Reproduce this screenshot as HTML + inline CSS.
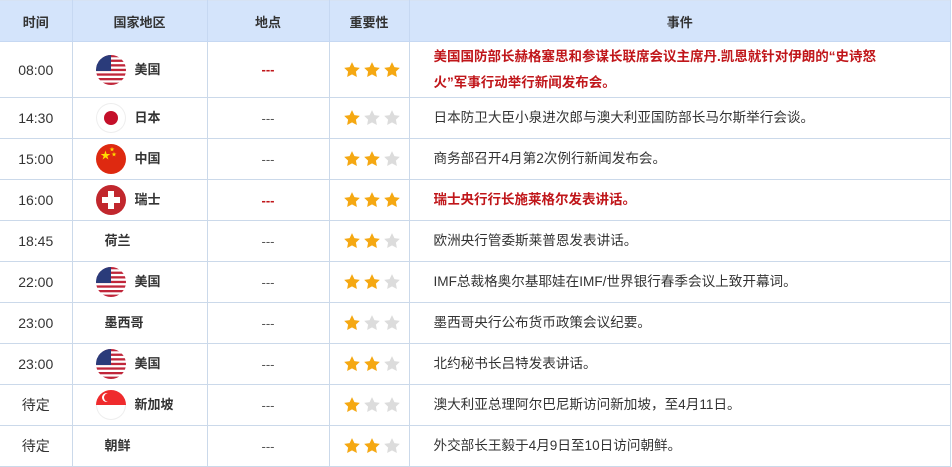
<!DOCTYPE html>
<html><head><meta charset="utf-8"><style>
body{margin:0;background:#fff;font-family:"Liberation Sans","Noto Sans CJK SC",sans-serif;font-size:13px;color:#333;}
table{border-collapse:collapse;table-layout:fixed;width:951px;position:absolute;left:0;top:0;}
td,th{border:1px solid #cbd9ea;padding:0;}
tr td:first-child,tr th:first-child{border-left:none;}
th{background:#d4e4fb;height:40px;font-weight:bold;font-size:13px;color:#333;border-color:#c6d8f2;border-top:1px solid #d6e2f3;}
td{height:40px;}
.t{text-align:center;font-size:14px;}
.c{position:relative;}
.c .f{position:absolute;left:23px;top:50%;margin-top:-15px;width:30px;height:30px;border-radius:50%;overflow:hidden;}
.c .n{position:absolute;left:62px;top:50%;margin-top:-9px;font-weight:bold;line-height:18px;}
.c .n2{left:32px;}
.d{text-align:center;color:#555;}
.dr{color:#c0161a;font-weight:bold;}
.s{padding-left:13px;}
.s svg{display:inline-block;vertical-align:middle;margin-right:2px;}
.e{padding-left:24px;line-height:26px;font-size:13.6px;}
.r{color:#c0161a;font-weight:bold;font-size:13.5px;}
</style></head><body>
<svg width="0" height="0" style="position:absolute"><defs>
<symbol id="st" viewBox="0 0 24 24"><path d="M12 1.5l3.2 6.6 7.2 1-5.2 5 1.3 7.2L12 17.9 5.5 21.3l1.3-7.2-5.2-5 7.2-1z"/></symbol>
<symbol id="us" viewBox="0 0 30 30"><rect width="30" height="30" fill="#fff"/><g fill="#c0263a"><rect y="0" width="30" height="2.3"/><rect y="4.6" width="30" height="2.3"/><rect y="9.2" width="30" height="2.3"/><rect y="13.8" width="30" height="2.3"/><rect y="18.4" width="30" height="2.3"/><rect y="23" width="30" height="2.3"/><rect y="27.6" width="30" height="2.4"/></g><rect width="15" height="16" fill="#2a3b7a"/></symbol>
</defs></svg>
<table>
<colgroup><col style="width:72px"><col style="width:135px"><col style="width:122px"><col style="width:80px"><col></colgroup>
<tr><th>时间</th><th>国家地区</th><th>地点</th><th>重要性</th><th>事件</th></tr>
<tr><td class="t" style="height:55px">08:00</td><td class="c"><div class="f"><svg width="30" height="30"><use href="#us"/></svg></div><span class="n">美国</span></td><td class="d dr">---</td><td class="s"><svg width="18" height="18" fill="#f5a812"><use href="#st"/></svg><svg width="18" height="18" fill="#f5a812"><use href="#st"/></svg><svg width="18" height="18" fill="#f5a812"><use href="#st"/></svg></td><td class="e r" style="white-space:nowrap">美国国防部长赫格塞思和参谋长联席会议主席丹.凯恩就针对伊朗的“史诗怒<br>火”军事行动举行新闻发布会。</td></tr>
<tr><td class="t">14:30</td><td class="c"><div class="f" style="background:#fff;box-shadow:inset 0 0 0 1px #eee"><div style="position:absolute;left:8px;top:8px;width:14px;height:14px;border-radius:50%;background:#c4102a"></div></div><span class="n">日本</span></td><td class="d">---</td><td class="s"><svg width="18" height="18" fill="#f5a812"><use href="#st"/></svg><svg width="18" height="18" fill="#dcdcdc"><use href="#st"/></svg><svg width="18" height="18" fill="#dcdcdc"><use href="#st"/></svg></td><td class="e">日本防卫大臣小泉进次郎与澳大利亚国防部长马尔斯举行会谈。</td></tr>
<tr><td class="t">15:00</td><td class="c"><div class="f" style="background:#de2910"><span style="position:absolute;left:5px;top:3px;color:#ffde00;font-size:10px">★</span><span style="position:absolute;left:14px;top:2px;color:#ffde00;font-size:5px">★</span><span style="position:absolute;left:16px;top:7px;color:#ffde00;font-size:5px">★</span></div><span class="n">中国</span></td><td class="d">---</td><td class="s"><svg width="18" height="18" fill="#f5a812"><use href="#st"/></svg><svg width="18" height="18" fill="#f5a812"><use href="#st"/></svg><svg width="18" height="18" fill="#dcdcdc"><use href="#st"/></svg></td><td class="e">商务部召开4月第2次例行新闻发布会。</td></tr>
<tr><td class="t">16:00</td><td class="c"><div class="f" style="background:#c1272d"><div style="position:absolute;left:12px;top:6px;width:6px;height:18px;background:#fff"></div><div style="position:absolute;left:6px;top:12px;width:18px;height:6px;background:#fff"></div></div><span class="n">瑞士</span></td><td class="d dr">---</td><td class="s"><svg width="18" height="18" fill="#f5a812"><use href="#st"/></svg><svg width="18" height="18" fill="#f5a812"><use href="#st"/></svg><svg width="18" height="18" fill="#f5a812"><use href="#st"/></svg></td><td class="e r">瑞士央行行长施莱格尔发表讲话。</td></tr>
<tr><td class="t">18:45</td><td class="c"><span class="n n2">荷兰</span></td><td class="d">---</td><td class="s"><svg width="18" height="18" fill="#f5a812"><use href="#st"/></svg><svg width="18" height="18" fill="#f5a812"><use href="#st"/></svg><svg width="18" height="18" fill="#dcdcdc"><use href="#st"/></svg></td><td class="e">欧洲央行管委斯莱普恩发表讲话。</td></tr>
<tr><td class="t">22:00</td><td class="c"><div class="f"><svg width="30" height="30"><use href="#us"/></svg></div><span class="n">美国</span></td><td class="d">---</td><td class="s"><svg width="18" height="18" fill="#f5a812"><use href="#st"/></svg><svg width="18" height="18" fill="#f5a812"><use href="#st"/></svg><svg width="18" height="18" fill="#dcdcdc"><use href="#st"/></svg></td><td class="e">IMF总裁格奥尔基耶娃在IMF/世界银行春季会议上致开幕词。</td></tr>
<tr><td class="t">23:00</td><td class="c"><span class="n n2">墨西哥</span></td><td class="d">---</td><td class="s"><svg width="18" height="18" fill="#f5a812"><use href="#st"/></svg><svg width="18" height="18" fill="#dcdcdc"><use href="#st"/></svg><svg width="18" height="18" fill="#dcdcdc"><use href="#st"/></svg></td><td class="e">墨西哥央行公布货币政策会议纪要。</td></tr>
<tr><td class="t">23:00</td><td class="c"><div class="f"><svg width="30" height="30"><use href="#us"/></svg></div><span class="n">美国</span></td><td class="d">---</td><td class="s"><svg width="18" height="18" fill="#f5a812"><use href="#st"/></svg><svg width="18" height="18" fill="#f5a812"><use href="#st"/></svg><svg width="18" height="18" fill="#dcdcdc"><use href="#st"/></svg></td><td class="e">北约秘书长吕特发表讲话。</td></tr>
<tr><td class="t">待定</td><td class="c"><div class="f" style="background:#fff;box-shadow:inset 0 0 0 1px #eee"><div style="position:absolute;left:0;top:0;width:30px;height:15px;background:#ef2b2d"></div><div style="position:absolute;left:6px;top:3px;width:9px;height:9px;border-radius:50%;background:#fff"></div><div style="position:absolute;left:8.5px;top:3px;width:9px;height:9px;border-radius:50%;background:#ef2b2d"></div></div><span class="n">新加坡</span></td><td class="d">---</td><td class="s"><svg width="18" height="18" fill="#f5a812"><use href="#st"/></svg><svg width="18" height="18" fill="#dcdcdc"><use href="#st"/></svg><svg width="18" height="18" fill="#dcdcdc"><use href="#st"/></svg></td><td class="e">澳大利亚总理阿尔巴尼斯访问新加坡，至4月11日。</td></tr>
<tr><td class="t">待定</td><td class="c"><span class="n n2">朝鲜</span></td><td class="d">---</td><td class="s"><svg width="18" height="18" fill="#f5a812"><use href="#st"/></svg><svg width="18" height="18" fill="#f5a812"><use href="#st"/></svg><svg width="18" height="18" fill="#dcdcdc"><use href="#st"/></svg></td><td class="e">外交部长王毅于4月9日至10日访问朝鲜。</td></tr>
</table>
</body></html>
